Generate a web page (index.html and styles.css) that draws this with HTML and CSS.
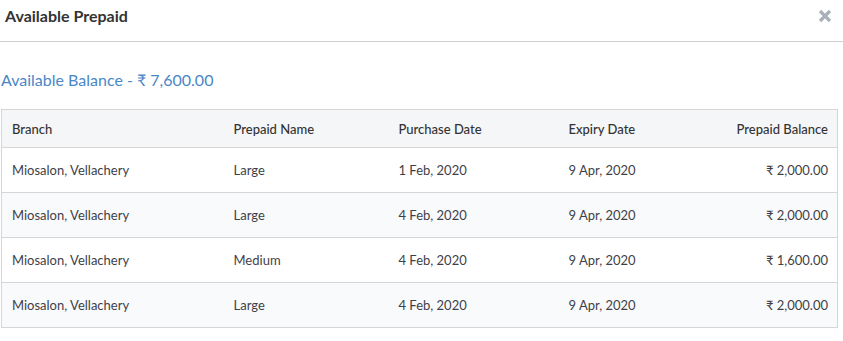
FILE: index.html
```html
<!DOCTYPE html>
<html lang="en">
<head>
    <meta charset="UTF-8">
    <title>Available Prepaid</title>
    <link rel="stylesheet" href="styles.css">
</head>
<body>
    <header class="modal-header">
        <h2 class="modal-title">Available Prepaid</h2>
        <span class="close">
            <svg width="14" height="14" viewBox="0 0 14 14"><path d="M2 2 L12 12 M12 2 L2 12" stroke="#a9b0b7" stroke-width="3.2" stroke-linecap="butt"/></svg>
        </span>
    </header>

    <main class="modal-body">
        <p class="balance">Available Balance - ₹ 7,600.00</p>
        <table class="prepaid-table">
            <thead>
                <tr>
                    <th class="col-branch">Branch</th>
                    <th class="col-name">Prepaid Name</th>
                    <th class="col-purchase">Purchase Date</th>
                    <th class="col-expiry">Expiry Date</th>
                    <th class="amount">Prepaid Balance</th>
                </tr>
            </thead>
            <tbody>
                <tr>
                    <td>Miosalon, Vellachery</td>
                    <td>Large</td>
                    <td>1 Feb, 2020</td>
                    <td>9 Apr, 2020</td>
                    <td class="amount">₹ 2,000.00</td>
                </tr>
                <tr>
                    <td>Miosalon, Vellachery</td>
                    <td>Large</td>
                    <td>4 Feb, 2020</td>
                    <td>9 Apr, 2020</td>
                    <td class="amount">₹ 2,000.00</td>
                </tr>
                <tr>
                    <td>Miosalon, Vellachery</td>
                    <td>Medium</td>
                    <td>4 Feb, 2020</td>
                    <td>9 Apr, 2020</td>
                    <td class="amount">₹ 1,600.00</td>
                </tr>
                <tr>
                    <td>Miosalon, Vellachery</td>
                    <td>Large</td>
                    <td>4 Feb, 2020</td>
                    <td>9 Apr, 2020</td>
                    <td class="amount">₹ 2,000.00</td>
                </tr>
            </tbody>
        </table>
    </main>
</body>
</html>
```

FILE: styles.css
```css
* {
    margin: 0;
    padding: 0;
    box-sizing: border-box;
}

body {
    font-family: 'Lato', 'Noto Sans', sans-serif;
    color: #3a3a40;
    background: white;
}

.modal-header {
    display: flex;
    justify-content: space-between;
    align-items: flex-start;
    height: 42px;
    padding: 6px 11px 0 5px;
    border-bottom: 1px solid #cfcfcf;
}

.modal-title {
    font-size: 16px;
    font-weight: 700;
    color: #333;
    line-height: 20px;
}

.close {
    display: flex;
    margin-top: 3px;
    cursor: pointer;
}

.modal-body {
    padding: 28px 5px 0 1px;
}

.balance {
    font-size: 16px;
    color: #4a87c6;
    line-height: 20px;
    margin-bottom: 19px;
}

.prepaid-table {
    width: 837px;
    border-collapse: collapse;
    border: 1px solid #d6d6d6;
    font-size: 13px;
}

.prepaid-table th,
.prepaid-table td {
    text-align: left;
    padding: 0 9px 0 10px;
    border-bottom: 1px solid #d6d6d6;
}

.prepaid-table th {
    height: 38px;
    font-weight: 500;
    color: #333;
    background-color: #f5f6f8;
}

.prepaid-table td {
    height: 45px;
    color: #3f3f48;
}

.prepaid-table tbody tr:nth-child(even) {
    background-color: #f9fafb;
}

.col-branch { width: 222px; }
.col-name { width: 165px; }
.col-purchase { width: 170px; }
.col-expiry { width: 140px; }

.prepaid-table .amount {
    text-align: right;
}
```
